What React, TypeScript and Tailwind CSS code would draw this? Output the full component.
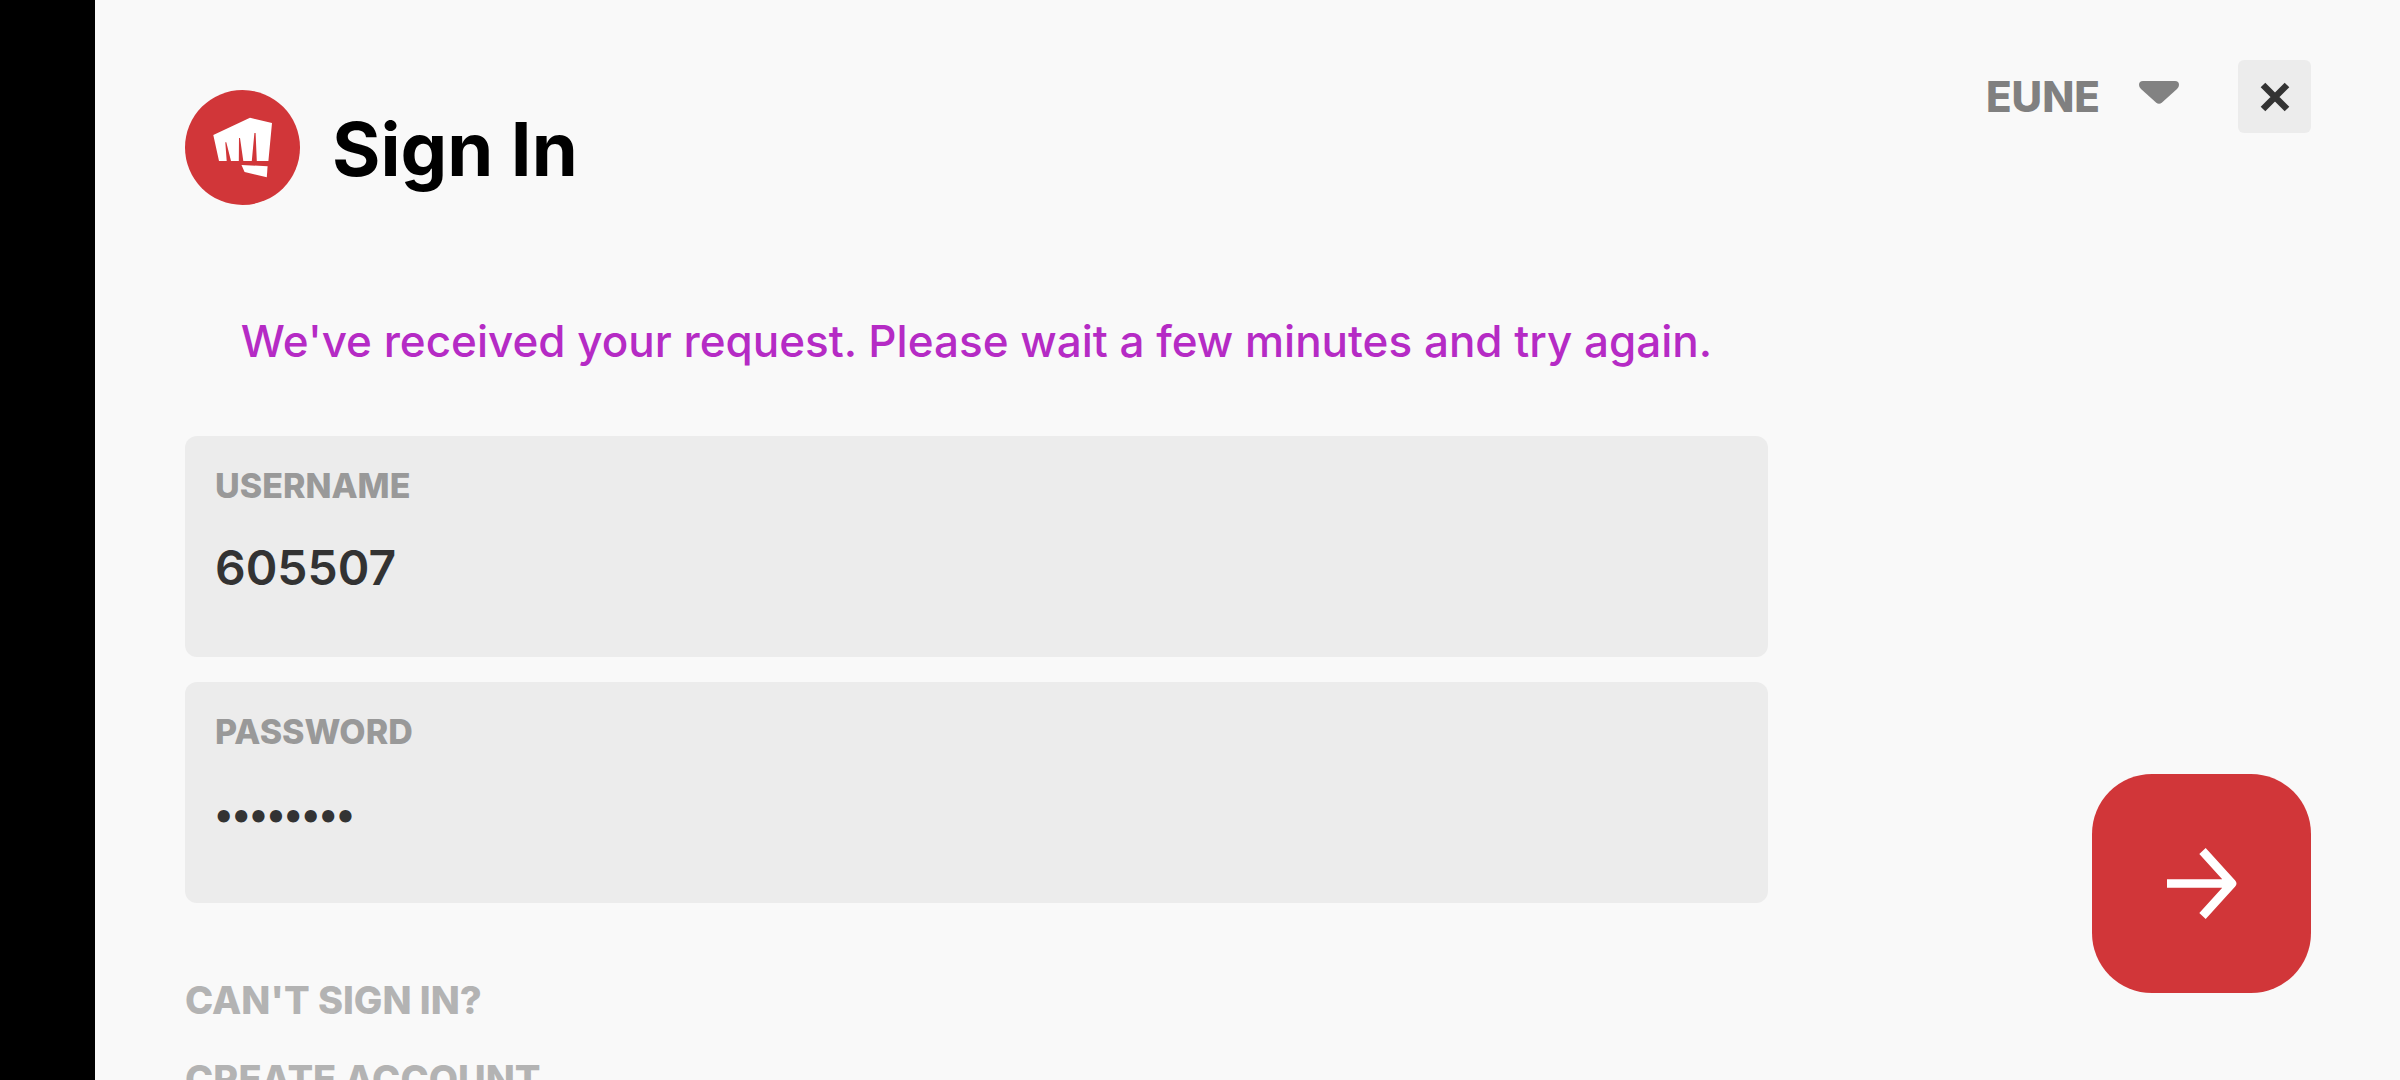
import { useState } from "react";

const regions = ["EUNE", "EUW", "NA", "BR", "TR"];

function FistLogo() {
  return (
    <svg viewBox="0 0 115 115" className="size-[115px] shrink-0" aria-hidden="true">
      <circle cx="57.5" cy="57.5" r="57.5" fill="#d13639" />
      <g fill="#fff">
        <path d="M28.3 45 65 27.8 87 33 83.4 71H71.8L70.6 43H69.4L66.8 71H58.3L55 48H54L53.8 71H46L41.3 52.300H40.3L41.700 71H34Z" />
        <path d="M56.5 75 82.6 76.200 81.8 87.2 59.6 82Z" />
      </g>
    </svg>
  );
}

type FieldProps = {
  id: string;
  label: string;
  type: "text" | "password";
  value: string;
  onChange: (value: string) => void;
};

const inputStyles = {
  text: "text-[48px]",
  password: "font-['Lato',sans-serif] text-[30px]",
};

function Field({ id, label, type, value, onChange }: FieldProps) {
  return (
    <div className="flex flex-col gap-8 rounded-xl bg-[#ececec] px-[30px] pt-[30px] pb-[59px]">
      <label htmlFor={id} className="text-[34px] leading-10 font-extrabold text-[#999999]">
        {label}
      </label>
      <input
        id={id}
        type={type}
        value={value}
        onChange={(e) => onChange(e.target.value)}
        className={`h-[60px] w-full bg-transparent leading-[60px] font-semibold text-[#333333] outline-none ${inputStyles[type]}`}
      />
    </div>
  );
}

export default function App() {
  const [username, setUsername] = useState("605507");
  const [password, setPassword] = useState("riotgame");
  const [region, setRegion] = useState("EUNE");

  return (
    <div className="flex h-screen overflow-hidden bg-[#f9f9f9] font-['Inter',sans-serif]">
      <div className="w-[95px] shrink-0 bg-black" />
      <form className="flex min-w-0 flex-1 pr-[89px] pl-[90px]" onSubmit={(e) => e.preventDefault()}>
        <main className="flex min-w-0 flex-1 flex-col pt-[90px]">
          <header className="flex items-center gap-8">
            <FistLogo />
            <h1 className="pt-0.5 text-[74px] leading-none font-bold text-black">Sign In</h1>
          </header>

          <p
            role="status"
            className="mt-[106px] text-center text-[44px] leading-[60px] font-medium text-[#b52bc5]"
          >
            We've received your request. Please wait a few minutes and try again.
          </p>

          <div className="mt-[65px] flex flex-col gap-[25px]">
            <Field id="username" label="USERNAME" type="text" value={username} onChange={setUsername} />
            <Field id="password" label="PASSWORD" type="password" value={password} onChange={setPassword} />
          </div>

          <nav className="mt-[73px] flex flex-col items-start gap-[31px] text-[38px] leading-[48px] font-extrabold text-[#b3b3b3]">
            <a href="#recover">CAN'T SIGN IN?</a>
            <a href="#create">CREATE ACCOUNT</a>
          </nav>
        </main>

        <aside className="flex w-[543px] shrink-0 flex-col items-end justify-between pt-[60px] pb-[87px]">
          <div className="flex items-center gap-[58px]">
            <div className="relative flex items-center">
              <select
                aria-label="Region"
                value={region}
                onChange={(e) => setRegion(e.target.value)}
                className="w-[194px] appearance-none bg-transparent text-[42px] leading-[60px] font-extrabold text-[#808080] outline-none"
              >
                {regions.map((r) => (
                  <option key={r}>{r}</option>
                ))}
              </select>
              <svg
                viewBox="0 0 42 25"
                className="pointer-events-none absolute right-0 bottom-[22px] h-[25px] w-[42px]"
                aria-hidden="true"
              >
                <path
                  d="M5 1H37Q41 1 41 5Q41 7 39 9L24 22.500Q21 25 18 22.500L3 9Q1 7 1 5Q1 1 5 1Z"
                  fill="#828282"
                />
              </svg>
            </div>
            <button
              type="button"
              aria-label="Close"
              className="flex size-[73px] items-center justify-center rounded-md bg-[#ececec]"
            >
              <svg viewBox="0 0 30 30" className="size-[30px]" aria-hidden="true">
                <path d="M3 3 27 27M27 3 3 27" stroke="#333" strokeWidth="6.500" fill="none" />
              </svg>
            </button>
          </div>

          <button
            type="submit"
            aria-label="Sign in"
            className="flex size-[219px] items-center justify-center rounded-[60px] bg-[#d13639]"
          >
            <svg viewBox="0 0 70 72" className="h-[72px] w-[70px]" aria-hidden="true">
              <path d="M0 35.500H62M35.500 3 65 35.500 35.500 68" stroke="#fff" strokeWidth="8.600" strokeLinejoin="round" fill="none" />
            </svg>
          </button>
        </aside>
      </form>
    </div>
  );
}
